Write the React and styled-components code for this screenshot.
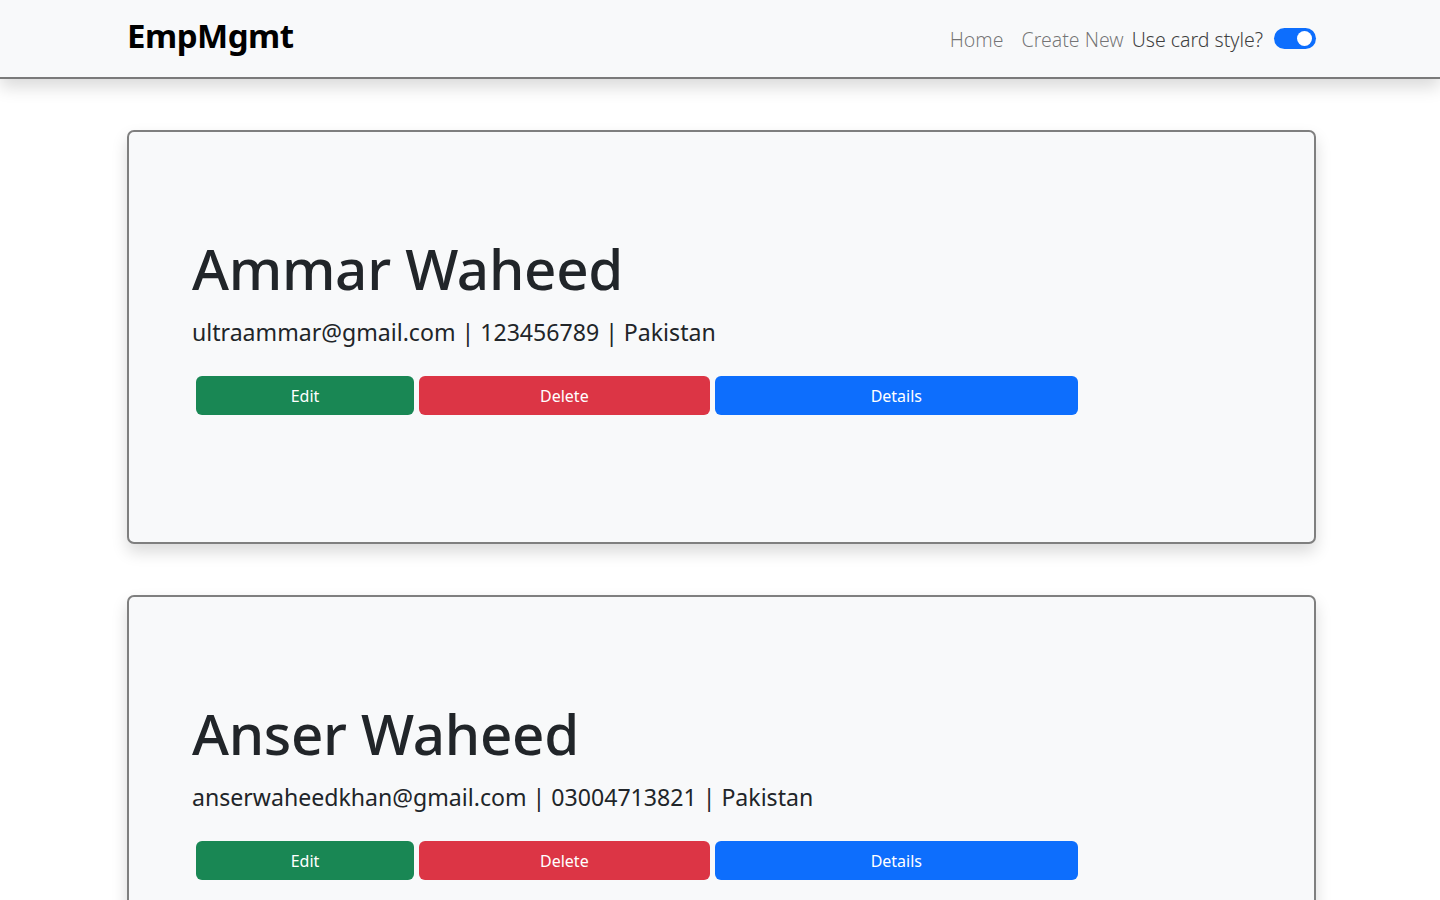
import React from "react";
import styled, { createGlobalStyle } from "styled-components";

const Global = createGlobalStyle`
  html, body { margin: 0; padding: 0; background: #fff; }
  body { font-family: "Noto Sans", "Open Sans", sans-serif; color: #212529; }
  * { box-sizing: border-box; }
`;

const Nav = styled.nav`
  height: 79px;
  background: #f8f9fa;
  border-bottom: 2px solid #7a7a7a;
  box-shadow: 0 8px 16px rgba(0, 0, 0, 0.15);
  display: flex;
  align-items: center;
  justify-content: space-between;
  padding: 0 124px 0 127px;
  position: relative;
  z-index: 1;
`;

const Brand = styled.a`
  font-size: 33px;
  font-weight: 700;
  color: #000;
  letter-spacing: -0.5px;
  margin-top: -6px;
`;

const NavRight = styled.div`
  display: flex;
  align-items: center;
  font-size: 19.5px;
  font-weight: 300;
  margin-top: 2px;
`;

const NavLink = styled.a`
  color: rgba(0, 0, 0, 0.55);
  margin-right: ${(p) => p.$mr || 18}px;
`;

const SwitchLabel = styled.label`
  display: flex;
  align-items: center;
  color: #3f3f3f;
  font-weight: 300;
`;

const Switch = styled.span`
  width: 42px;
  height: 21px;
  border-radius: 11px;
  background: #0d6efd;
  margin-left: 11px;
  margin-top: -2px;
  display: flex;
  align-items: center;
  justify-content: flex-end;
  padding-right: 4px;
  &::after {
    content: "";
    width: 15px;
    height: 15px;
    border-radius: 50%;
    background: #fff;
  }
`;

const Main = styled.main`
  padding: 51px 124px 0 127px;
  display: flex;
  flex-direction: column;
  gap: 51px;
`;

const Card = styled.section`
  height: 414px;
  background: #f8f9fa;
  border: 2px solid #7f7f7f;
  border-radius: 7px;
  box-shadow: 0 8px 16px rgba(0, 0, 0, 0.15);
  padding: 98px 63px 0;
`;

const Name = styled.h1`
  margin: 0;
  font-size: 56.5px;
  font-weight: 500;
  line-height: 78px;
  letter-spacing: -0.3px;
`;

const Info = styled.p`
  margin: 6px 0 0;
  font-size: 23.1px;
  line-height: 36px;
`;

const Actions = styled.div`
  display: grid;
  grid-template-columns: 3fr 4fr 5fr;
  gap: 5px;
  width: 882px;
  margin: 26px 0 0 4px;
`;

const Btn = styled.button`
  height: 39px;
  border: none;
  border-radius: 6px;
  background: ${(p) => p.$bg};
  color: #fff;
  font-family: inherit;
  font-size: 16px;
  cursor: pointer;
`;

const employees = [
  { name: "Ammar Waheed", email: "ultraammar@gmail.com", phone: "123456789", country: "Pakistan" },
  { name: "Anser Waheed", email: "anserwaheedkhan@gmail.com", phone: "03004713821", country: "Pakistan" },
];

export default function App() {
  return (
    <>
      <Global />
      <Nav>
        <Brand>EmpMgmt</Brand>
        <NavRight>
          <NavLink>Home</NavLink>
          <NavLink $mr={8}>Create New</NavLink>
          <SwitchLabel>
            Use card style?
            <Switch />
          </SwitchLabel>
        </NavRight>
      </Nav>
      <Main>
        {employees.map((e) => (
          <Card key={e.email}>
            <Name>{e.name}</Name>
            <Info>
              {e.email} | {e.phone} | {e.country}
            </Info>
            <Actions>
              <Btn $bg="#198754">Edit</Btn>
              <Btn $bg="#dc3545">Delete</Btn>
              <Btn $bg="#0d6efd">Details</Btn>
            </Actions>
          </Card>
        ))}
      </Main>
    </>
  );
}
